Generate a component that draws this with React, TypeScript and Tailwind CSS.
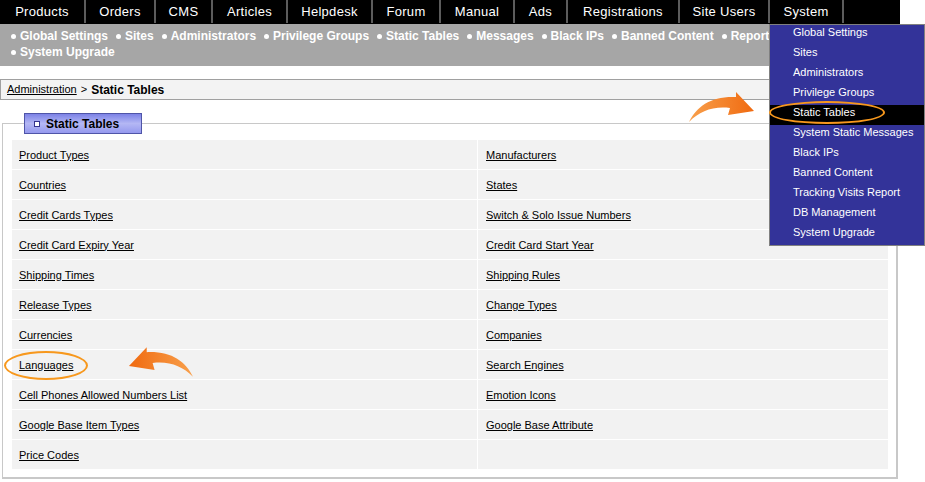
const TABS: [string, string][] = [
  ['Products', 'w-[86px]'],
  ['Orders', 'w-[70px]'],
  ['CMS', 'w-[57px]'],
  ['Articles', 'w-[75px]'],
  ['Helpdesk', 'w-[85px]'],
  ['Forum', 'w-[68px]'],
  ['Manual', 'w-[74px]'],
  ['Ads', 'w-[53px]'],
  ['Registrations', 'w-[112px]'],
  ['Site Users', 'w-[90px]'],
  ['System', 'w-[74px]'],
];

const SUB_LINKS = [
  'Global Settings',
  'Sites',
  'Administrators',
  'Privilege Groups',
  'Static Tables',
  'Messages',
  'Black IPs',
  'Banned Content',
  'Reports',
  'System Upgrade',
];

const MENU = [
  'Global Settings',
  'Sites',
  'Administrators',
  'Privilege Groups',
  'Static Tables',
  'System Static Messages',
  'Black IPs',
  'Banned Content',
  'Tracking Visits Report',
  'DB Management',
  'System Upgrade',
];

const ROWS = [
  ['Product Types', 'Manufacturers'],
  ['Countries', 'States'],
  ['Credit Cards Types', 'Switch & Solo Issue Numbers'],
  ['Credit Card Expiry Year', 'Credit Card Start Year'],
  ['Shipping Times', 'Shipping Rules'],
  ['Release Types', 'Change Types'],
  ['Currencies', 'Companies'],
  ['Languages', 'Search Engines'],
  ['Cell Phones Allowed Numbers List', 'Emotion Icons'],
  ['Google Base Item Types', 'Google Base Attribute'],
  ['Price Codes', ''],
];

function Arrow({ flip, className }: { flip?: boolean; className: string }) {
  return (
    <svg viewBox="0 0 66 30" className={className} style={flip ? { transform: 'scaleX(-1)' } : undefined}>
      <defs>
        <linearGradient id={flip ? 'arrowB' : 'arrowA'} x1="0" y1="0" x2="1" y2="0">
          <stop offset="0" stopColor="#f8a04c" />
          <stop offset="1" stopColor="#f06a10" />
        </linearGradient>
      </defs>
      <path
        d="M0 30 C8 14 22 4 47 5 L47 0 L65 19 L39 23 L41 16 C24 14 11 19 0 30 Z"
        fill={`url(#${flip ? 'arrowB' : 'arrowA'})`}
      />
    </svg>
  );
}

export default function App() {
  return (
    <div className="relative w-[925px] h-[482px] overflow-hidden bg-white font-['Liberation_Sans',sans-serif] text-[11px] text-black">
      {/* Top nav */}
      <div className="flex w-[900px] h-6 bg-black">
        {TABS.map(([label, width]) => (
          <div
            key={label}
            className={`${width} h-[23px] flex items-center justify-center border-r-2 border-[#5c5c5c] text-white text-[13px] tracking-[0.3px]`}
          >
            {label}
          </div>
        ))}
      </div>

      {/* Sub nav */}
      <div className="w-[900px] h-[42px] bg-[#a6a6a6] pl-[11px] pt-[4px] text-white font-bold text-[12px] leading-4">
        <div className="flex gap-[8px]">
          {SUB_LINKS.slice(0, 9).map((s) => (
            <span key={s} className="flex items-center gap-[4px] whitespace-nowrap">
              <span className="w-[5px] h-[5px] rounded-full bg-white" />
              {s}
            </span>
          ))}
        </div>
        <div className="flex items-center gap-[4px]">
          <span className="w-[5px] h-[5px] rounded-full bg-white" />
          {SUB_LINKS[9]}
        </div>
      </div>

      {/* Breadcrumb */}
      <div className="mt-[13px] w-[900px] h-[21px] flex items-center gap-1 border-y border-l border-[#a0a0a0] bg-[#f3f3f3] pl-[6px]">
        <a className="underline">Administration</a>
        <span>&gt;</span>
        <b className="text-[12px]">Static Tables</b>
      </div>

      {/* Panel */}
      <div className="relative mt-[23px] ml-[2px] w-[896px] h-[356px] border border-[#c8c8c8] border-b-2 border-r-2 pl-[9px] pt-[16px]">
        <div className="absolute left-[21px] top-[-11px] w-[118px] h-[21px] flex items-center gap-[6px] pl-[9px] border border-[#4f55a8] bg-gradient-to-b from-[#7d82e6] via-[#b4b7f4] to-[#9599ee] text-[12px] font-bold">
          <span className="w-[6px] h-[6px] border border-[#33338f] bg-white" />
          Static Tables
        </div>
        <div className="w-[876px]">
          {ROWS.map(([a, b]) => (
            <div key={a} className="grid grid-cols-[466px_410px] h-[30px] bg-[#f2f2f2] border-b border-white">
              <div className="flex items-center pl-[7px] pt-px border-r border-white">
                <a className="underline">{a}</a>
              </div>
              <div className="flex items-center pl-2 pt-px">
                <a className="underline">{b}</a>
              </div>
            </div>
          ))}
        </div>
      </div>

      {/* System dropdown */}
      <div className="absolute left-[769px] top-6 w-[156px] h-[222px] bg-[#333399] border border-[#808080] text-white">
        {MENU.map((m) => (
          <div
            key={m}
            className={`h-5 flex items-center pl-[23px] pb-[5px] ${m === 'Static Tables' ? 'bg-black' : ''}`}
          >
            {m}
          </div>
        ))}
      </div>

      {/* Callout ovals and arrows */}
      <div className="absolute left-[769px] top-[101px] w-[116px] h-[23px] rounded-[50%] border-2 border-[#f7981d]" />
      <div className="absolute left-[4px] top-[351px] w-[84px] h-[29px] rounded-[50%] border-2 border-[#f7981d]" />
      <Arrow className="absolute left-[689px] top-[92px] w-[66px] h-[30px]" />
      <Arrow flip className="absolute left-[128px] top-[347px] w-[65px] h-[30px]" />
    </div>
  );
}
